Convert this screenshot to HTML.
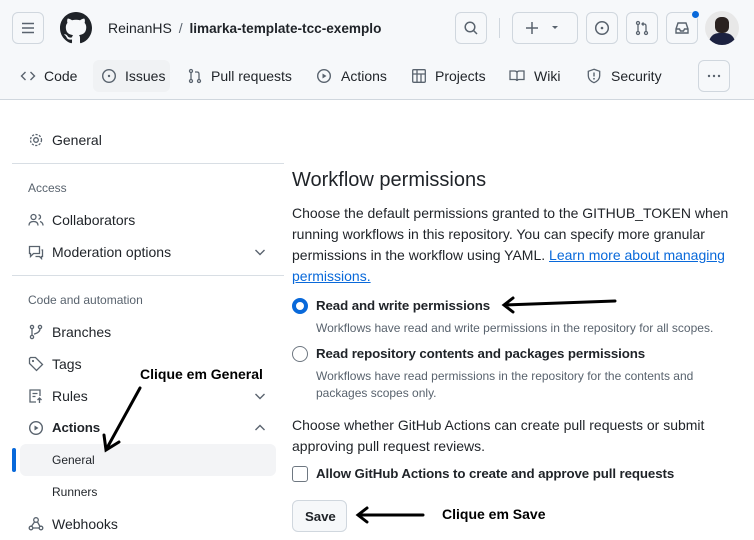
<!DOCTYPE html>
<html><head><meta charset="utf-8"><style>
*{box-sizing:border-box;margin:0;padding:0}
body{width:754px;height:540px;overflow:hidden;background:#fff;font-family:"Liberation Sans",sans-serif;color:#1f2328;position:relative;font-size:14px}
.a{position:absolute;white-space:nowrap}
.hdr{position:absolute;left:0;top:0;width:754px;height:100px;background:#f6f8fa;border-bottom:1px solid #d0d7de}
.btn{position:absolute;border:1px solid #d0d7de;border-radius:6px;background:#f6f8fa}
svg{position:absolute}
.nav{font-size:14px;color:#1f2328}
.side{font-size:14px}
.sec{font-size:12px;color:#59636e}
.sep{position:absolute;left:12px;width:272px;height:1px;background:#d8dee4}
.p{font-size:14px;line-height:21px}
.d{font-size:12px;color:#59636e;line-height:17px}
.ann{font-weight:bold;font-size:14px;color:#000}
.bb{font-weight:bold;font-size:13.3px;letter-spacing:-0.1px}
</style></head><body>
<div class="hdr"></div>
<div class="btn" style="left:12px;top:12px;width:32px;height:32px"></div>
<svg style="left:20px;top:20px" width="16" height="16" viewBox="0 0 16 16"><path d="M2 3.5h12M2 8h12M2 12.5h12" stroke="#59636e" stroke-width="1.5"/></svg>
<svg style="left:60px;top:12px" width="32" height="32" viewBox="0 0 16 16"><path fill="#1f2328" d="M8 0C3.58 0 0 3.580 0 8c0 3.54 2.29 6.53 5.47 7.59.4.07.55-.17.55-.38 0-.19-.01-.82-.01-1.49-2.01.37-2.530-.49-2.69-.94-.09-.23-.48-.94-.82-1.13-.28-.15-.68-.52-.01-.53.63-.01 1.08.58 1.23.82.72 1.21 1.87.87 2.33.66.07-.52.28-.87.51-1.07-1.780-.2-3.64-.89-3.64-3.95 0-.87.31-1.59.82-2.15-.08-.2-.36-1.02.08-2.12 0 0 .67-.21 2.2.82.64-.18 1.32-.27 2-.27.68 0 1.36.09 2 .27 1.53-1.04 2.2-.82 2.2-.82.44 1.1.16 1.92.08 2.12.51.56.82 1.27.82 2.15 0 3.07-1.87 3.75-3.65 3.95.29.25.54.73.54 1.48 0 1.07-.01 1.93-.01 2.2 0 .21.15.46.55.38A8.013 8.013 0 0016 8c0-4.42-3.58-8-8-8z"/></svg>
<div class="a" style="left:108px;top:19px;font-size:14px;line-height:18px">ReinanHS <span style="color:#59636e;margin:0 3px">/</span> <b style="font-size:13.6px">limarka-template-tcc-exemplo</b></div>
<div class="btn" style="left:455px;top:12px;width:32px;height:32px"></div>
<svg style="left:463px;top:20px" width="16" height="16" viewBox="0 0 16 16"><circle cx="7" cy="7" r="4.8" fill="none" stroke="#59636e" stroke-width="1.5"/><path d="M10.5 10.5L14 14" stroke="#59636e" stroke-width="1.5"/></svg>
<div class="a" style="left:499px;top:18px;width:1px;height:20px;background:#d0d7de"></div>
<div class="btn" style="left:512px;top:12px;width:66px;height:32px"></div>
<svg style="left:524px;top:20px" width="16" height="16" viewBox="0 0 16 16"><path d="M8 2v12M2 8h12" stroke="#59636e" stroke-width="1.5"/></svg>
<svg style="left:550px;top:24px" width="10" height="8" viewBox="0 0 10 8"><path d="M2 2h6L5 5z" fill="#59636e"/></svg>
<div class="btn" style="left:586px;top:12px;width:32px;height:32px"></div>
<svg style="left:594px;top:20px" width="16" height="16" viewBox="0 0 16 16"><circle cx="8" cy="8" r="6.3" fill="none" stroke="#59636e" stroke-width="1.5"/><circle cx="8" cy="8" r="1.3" fill="#59636e"/></svg>
<div class="btn" style="left:626px;top:12px;width:32px;height:32px"></div>
<svg style="left:634px;top:20px" width="16" height="16" viewBox="0 0 16 16"><circle cx="4" cy="3" r="1.5" fill="none" stroke="#59636e" stroke-width="1.3"/><circle cx="4" cy="13" r="1.5" fill="none" stroke="#59636e" stroke-width="1.3"/><circle cx="12" cy="13" r="1.5" fill="none" stroke="#59636e" stroke-width="1.3"/><path d="M4 4.5v7M12 11.5V6q0-2-2-2H8M9.5 2.5L8 4l1.5 1.5" fill="none" stroke="#59636e" stroke-width="1.3"/></svg>
<div class="btn" style="left:666px;top:12px;width:32px;height:32px"></div>
<svg style="left:674px;top:20px" width="16" height="16" viewBox="0 0 16 16"><path d="M2 9l2-6h8l2 6v4H2zM2 9h3.5l1 2h3l1-2H14" fill="none" stroke="#59636e" stroke-width="1.4"/></svg>
<div class="a" style="left:691px;top:10px;width:9px;height:9px;border-radius:50%;background:#0969da;border:1px solid #f6f8fa"></div>
<div class="a" style="left:705px;top:11px;width:34px;height:34px;border-radius:50%;background:#e8e8e8;overflow:hidden"><div class="a" style="left:10px;top:6px;width:14px;height:16px;border-radius:6px;background:#2a2220"></div><div class="a" style="left:4px;top:22px;width:26px;height:14px;border-radius:10px 10px 0 0;background:#1c2240"></div></div>

<svg style="left:20px;top:68px" width="16" height="16" viewBox="0 0 16 16"><path d="M5.5 4L1.5 8l4 4M10.5 4l4 4-4 4" fill="none" stroke="#59636e" stroke-width="1.4"/></svg>
<div class="a nav" style="left:44px;top:68px">Code</div>
<div class="a" style="left:93px;top:60px;width:77px;height:32px;border-radius:6px;background:#f0f2f4"></div>
<svg style="left:101px;top:68px" width="16" height="16" viewBox="0 0 16 16"><circle cx="8" cy="8" r="6.3" fill="none" stroke="#59636e" stroke-width="1.4"/><circle cx="8" cy="8" r="1.2" fill="#59636e"/></svg>
<div class="a nav" style="left:125px;top:68px">Issues</div>
<svg style="left:187px;top:68px" width="16" height="16" viewBox="0 0 16 16"><circle cx="4" cy="3" r="1.5" fill="none" stroke="#59636e" stroke-width="1.3"/><circle cx="4" cy="13" r="1.5" fill="none" stroke="#59636e" stroke-width="1.3"/><circle cx="12" cy="13" r="1.5" fill="none" stroke="#59636e" stroke-width="1.3"/><path d="M4 4.5v7M12 11.5V6q0-2-2-2H8" fill="none" stroke="#59636e" stroke-width="1.3"/></svg>
<div class="a nav" style="left:211px;top:68px">Pull requests</div>
<svg style="left:316px;top:68px" width="16" height="16" viewBox="0 0 16 16"><circle cx="8" cy="8" r="6.3" fill="none" stroke="#59636e" stroke-width="1.4"/><path d="M6.5 5.5v5l4-2.5z" fill="#59636e"/></svg>
<div class="a nav" style="left:341px;top:68px">Actions</div>
<svg style="left:411px;top:68px" width="16" height="16" viewBox="0 0 16 16"><rect x="1.7" y="1.7" width="12.6" height="12.6" rx="1" fill="none" stroke="#59636e" stroke-width="1.3"/><path d="M6 2v12M10 6v8M1.7 6h12.6" stroke="#59636e" stroke-width="1.3"/></svg>
<div class="a nav" style="left:435px;top:68px">Projects</div>
<svg style="left:509px;top:68px" width="16" height="16" viewBox="0 0 16 16"><path d="M1 3h4.5q2.5 0 2.5 2v8q0-1.5-2-1.5H1zM15 3h-4.5Q8 3 8 5v8q0-1.5 2-1.5h5z" fill="none" stroke="#59636e" stroke-width="1.3"/></svg>
<div class="a nav" style="left:534px;top:68px">Wiki</div>
<svg style="left:586px;top:68px" width="16" height="16" viewBox="0 0 16 16"><path d="M8 1.3l5.7 2v4.5Q13.7 12.5 8 14.7 2.3 12.5 2.3 7.8V3.3z" fill="none" stroke="#59636e" stroke-width="1.3"/><path d="M8 4.5v4" stroke="#59636e" stroke-width="1.4"/><circle cx="8" cy="10.8" r=".9" fill="#59636e"/></svg>
<div class="a nav" style="left:611px;top:68px">Security</div>
<div class="btn" style="left:698px;top:60px;width:32px;height:32px"></div>
<svg style="left:706px;top:68px" width="16" height="16" viewBox="0 0 16 16"><circle cx="3" cy="8" r="1.2" fill="#59636e"/><circle cx="8" cy="8" r="1.2" fill="#59636e"/><circle cx="13" cy="8" r="1.2" fill="#59636e"/></svg>

<svg style="left:28px;top:132px" width="16" height="16" viewBox="0 0 16 16"><circle cx="8" cy="8" r="2.3" fill="none" stroke="#59636e" stroke-width="1.3"/><circle cx="8" cy="8" r="5.5" fill="none" stroke="#59636e" stroke-width="1.3" stroke-dasharray="2.2 1.4"/></svg>
<div class="a side" style="left:52px;top:132px">General</div>
<div class="sep" style="top:163px"></div>
<div class="a sec" style="left:28px;top:181px">Access</div>
<svg style="left:28px;top:212px" width="16" height="16" viewBox="0 0 16 16"><circle cx="5.5" cy="5" r="2.5" fill="none" stroke="#59636e" stroke-width="1.3"/><path d="M1 13.5q0-4 4.5-4t4.5 4M10.5 2.8q2 .5 2 2.2t-2 2.2M12 9.5q3 1 3 4" fill="none" stroke="#59636e" stroke-width="1.3"/></svg>
<div class="a side" style="left:52px;top:212px">Collaborators</div>
<svg style="left:28px;top:244px" width="16" height="16" viewBox="0 0 16 16"><path d="M1.5 2.5h10v7h-6l-3 3v-3h-1zM13.5 6h1v6.5h-1v2l-2-2h-4" fill="none" stroke="#59636e" stroke-width="1.3"/></svg>
<div class="a side" style="left:52px;top:244px">Moderation options</div>
<svg style="left:252px;top:244px" width="16" height="16" viewBox="0 0 16 16"><path d="M3.5 6l4.5 4.5L12.5 6" fill="none" stroke="#59636e" stroke-width="1.4"/></svg>
<div class="sep" style="top:275px"></div>
<div class="a sec" style="left:28px;top:293px">Code and automation</div>
<svg style="left:28px;top:324px" width="16" height="16" viewBox="0 0 16 16"><circle cx="4" cy="3" r="1.6" fill="none" stroke="#59636e" stroke-width="1.3"/><circle cx="4" cy="13" r="1.6" fill="none" stroke="#59636e" stroke-width="1.3"/><circle cx="12" cy="3" r="1.6" fill="none" stroke="#59636e" stroke-width="1.3"/><path d="M4 4.6v6.8M12 4.6q0 4-6 5.5" fill="none" stroke="#59636e" stroke-width="1.3"/></svg>
<div class="a side" style="left:52px;top:324px">Branches</div>
<svg style="left:28px;top:356px" width="16" height="16" viewBox="0 0 16 16"><path d="M1.5 2.5v5l7 7 6-6-7-7h-5z" fill="none" stroke="#59636e" stroke-width="1.3"/><circle cx="5" cy="5" r="1.1" fill="#59636e"/></svg>
<div class="a side" style="left:52px;top:356px">Tags</div>
<svg style="left:28px;top:388px" width="16" height="16" viewBox="0 0 16 16"><path d="M8 14H2V2h10v6M11.5 15v-5M9.5 12l2-2 2 2M4.5 5.5h5M4.5 8.5h3" fill="none" stroke="#59636e" stroke-width="1.3"/></svg>
<div class="a side" style="left:52px;top:388px">Rules</div>
<svg style="left:252px;top:388px" width="16" height="16" viewBox="0 0 16 16"><path d="M3.5 6l4.5 4.5L12.5 6" fill="none" stroke="#59636e" stroke-width="1.4"/></svg>
<svg style="left:28px;top:420px" width="16" height="16" viewBox="0 0 16 16"><circle cx="8" cy="8" r="6.3" fill="none" stroke="#59636e" stroke-width="1.4"/><path d="M6.5 5.5v5l4-2.5z" fill="#59636e"/></svg>
<div class="a side bb" style="left:52px;top:420px">Actions</div>
<svg style="left:252px;top:420px" width="16" height="16" viewBox="0 0 16 16"><path d="M3.5 10l4.5-4.5L12.5 10" fill="none" stroke="#59636e" stroke-width="1.4"/></svg>
<div class="a" style="left:20px;top:444px;width:256px;height:32px;border-radius:6px;background:#f3f4f6"></div>
<div class="a" style="left:12px;top:448px;width:4px;height:24px;border-radius:2px;background:#0969da"></div>
<div class="a" style="left:52px;top:453px;font-size:12px">General</div>
<div class="a" style="left:52px;top:485px;font-size:12px">Runners</div>
<svg style="left:28px;top:516px" width="16" height="16" viewBox="0 0 16 16"><circle cx="8" cy="4" r="2.3" fill="none" stroke="#59636e" stroke-width="1.3"/><circle cx="3" cy="12" r="1.8" fill="none" stroke="#59636e" stroke-width="1.3"/><circle cx="13" cy="12" r="1.8" fill="none" stroke="#59636e" stroke-width="1.3"/><path d="M6.5 6l-3 4.2M9.5 6l2.5 4.5M5 12h6" fill="none" stroke="#59636e" stroke-width="1.3"/></svg>
<div class="a side" style="left:52px;top:516px">Webhooks</div>
<div class="a ann" style="left:140px;top:366px">Clique em General</div>
<svg style="left:100px;top:385px" width="50" height="70" viewBox="0 0 50 70"><path d="M40 3L7 63M4 50l2 15 13-8" fill="none" stroke="#000" stroke-width="3" stroke-linecap="round"/></svg>

<div class="a" style="left:292px;top:169px;font-size:20px">Workflow permissions</div>
<div class="a p" style="left:292px;top:203px;white-space:normal;width:440px">Choose the default permissions granted to the GITHUB_TOKEN when running workflows in this repository. You can specify more granular permissions in the workflow using YAML. <span style="color:#0969da;text-decoration:underline">Learn more about managing permissions.</span></div>
<div class="a" style="left:292px;top:298px;width:16px;height:16px;border-radius:50%;border:4px solid #0969da;background:#fff"></div>
<div class="a bb" style="left:316px;top:298px">Read and write permissions</div>
<svg style="left:500px;top:296px" width="118" height="18" viewBox="0 0 118 18"><path d="M115 5L5 9M13 2L4 9l9 7" fill="none" stroke="#000" stroke-width="3" stroke-linecap="round"/></svg>
<div class="a d" style="left:316px;top:320px">Workflows have read and write permissions in the repository for all scopes.</div>
<div class="a" style="left:292px;top:346px;width:16px;height:16px;border-radius:50%;border:1px solid #6e7781;background:#fff"></div>
<div class="a bb" style="left:316px;top:346px">Read repository contents and packages permissions</div>
<div class="a d" style="left:316px;top:368px;white-space:normal;width:400px">Workflows have read permissions in the repository for the contents and packages scopes only.</div>
<div class="a p" style="left:292px;top:415px;white-space:normal;width:440px">Choose whether GitHub Actions can create pull requests or submit approving pull request reviews.</div>
<div class="a" style="left:292px;top:466px;width:16px;height:16px;border-radius:3px;border:1px solid #6e7781;background:#fff"></div>
<div class="a bb" style="left:316px;top:466px">Allow GitHub Actions to create and approve pull requests</div>
<div class="btn" style="left:292px;top:500px;width:55px;height:32px"></div>
<div class="a bb" style="left:305px;top:509px">Save</div>
<svg style="left:354px;top:506px" width="72" height="18" viewBox="0 0 72 18"><path d="M69 9H5M13 2L4 9l9 7" fill="none" stroke="#000" stroke-width="3" stroke-linecap="round"/></svg>
<div class="a ann" style="left:442px;top:506px">Clique em Save</div>
</body></html>
